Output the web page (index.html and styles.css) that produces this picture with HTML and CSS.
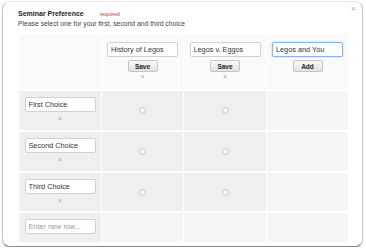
FILE: index.html
```html
<!DOCTYPE html>
<html>
<head>
    <title>Seminar Preference</title>
    <link rel="stylesheet" href="styles.css">
</head>
<body>
    <div class="card">
        <span class="close">&times;</span>
        <div class="title">Seminar Preference <span class="req">required</span></div>
        <div class="help">Please select one for your first, second and third choice</div>

        <div class="grid">
            <!-- header row -->
            <div class="cell head"></div>
            <div class="cell head col">
                <input type="text" value="History of Legos">
                <button>Save</button>
                <span class="x">&times;</span>
            </div>
            <div class="cell head col">
                <input type="text" value="Legos v. Eggos">
                <button>Save</button>
                <span class="x">&times;</span>
            </div>
            <div class="cell head col">
                <input type="text" class="focus" value="Legos and You">
                <button>Add</button>
            </div>

            <!-- rows -->
            <div class="cell label">
                <input type="text" value="First Choice">
                <span class="x">&times;</span>
            </div>
            <div class="cell"><span class="radio"></span></div>
            <div class="cell"><span class="radio"></span></div>
            <div class="cell new"></div>

            <div class="cell label">
                <input type="text" value="Second Choice">
                <span class="x">&times;</span>
            </div>
            <div class="cell"><span class="radio"></span></div>
            <div class="cell"><span class="radio"></span></div>
            <div class="cell new"></div>

            <div class="cell label">
                <input type="text" value="Third Choice">
                <span class="x">&times;</span>
            </div>
            <div class="cell"><span class="radio"></span></div>
            <div class="cell"><span class="radio"></span></div>
            <div class="cell new"></div>

            <div class="cell label">
                <input type="text" placeholder="Enter new row...">
            </div>
            <div class="cell new"></div>
            <div class="cell new"></div>
            <div class="cell new"></div>
        </div>
    </div>
</body>
</html>
```

FILE: styles.css
```css
html, body {
    margin: 0;
    padding: 0;
    background: #fff;
}

body {
    font-family: "Liberation Sans", Arial, sans-serif;
    color: #222;
}

.card {
    position: relative;
    box-sizing: border-box;
    margin: 1px 3px 0 2px;
    height: 246px;
    padding: 7px 15px 0 15px;
    background: #fff;
    border: 1px solid #c8c8c8;
    border-top-color: #e6e6e6;
    border-bottom-color: #8a8a8a;
    border-radius: 8px;
    box-shadow: 0 1px 1px rgba(0, 0, 0, 0.25);
}

.close {
    position: absolute;
    top: 2px;
    right: 6px;
    font-size: 9px;
    color: #b5b5b5;
}

.title {
    font-size: 7px;
    font-weight: bold;
    line-height: 9px;
    color: #222;
}

.req {
    font-size: 5.5px;
    font-weight: normal;
    color: #c0392b;
    margin-left: 14px;
}

.help {
    font-size: 6.8px;
    line-height: 9px;
    color: #444;
}

.grid {
    display: grid;
    grid-template-columns: 82px 81px 82px 81px;
    grid-template-rows: 55px 39px 39px 38px 29px;
    column-gap: 1px;
    row-gap: 2px;
    margin-top: 6px;
    margin-left: 1px;
}

.cell {
    background: #efefef;
    display: flex;
    flex-direction: column;
    align-items: center;
    justify-content: center;
}

.cell.head {
    background: #fafafa;
    justify-content: flex-start;
    padding-top: 8px;
}

.cell.new {
    background: #f5f5f5;
}

.cell.label {
    justify-content: flex-start;
    padding-top: 6px;
}

input {
    box-sizing: border-box;
    width: 71px;
    height: 15px;
    padding: 0 3px;
    border: 1px solid #d0d0d0;
    border-radius: 2px;
    background: #fff;
    font-family: "Liberation Sans", Arial, sans-serif;
    font-size: 7.3px;
    color: #333;
    margin: 0;
}

input::placeholder {
    color: #999;
}

input.focus {
    border-color: #8ab6e8;
    box-shadow: 0 0 2px rgba(82, 150, 230, 0.5);
}

button {
    margin-top: 3px;
    width: 30px;
    height: 12px;
    padding: 0;
    border: 1px solid #c4c4c4;
    border-radius: 2px;
    background: linear-gradient(#fafafa, #e2e2e2);
    font-family: "Liberation Sans", Arial, sans-serif;
    font-size: 6.5px;
    font-weight: bold;
    color: #222;
}

.x {
    font-size: 7px;
    line-height: 8px;
    color: #a5a5a5;
    margin-top: 1px;
}

.label .x {
    margin-top: 3px;
}

.radio {
    width: 7px;
    height: 7px;
    box-sizing: border-box;
    border: 1px solid #c6c6c6;
    border-radius: 50%;
    background: #f7f7f7;
}
```
